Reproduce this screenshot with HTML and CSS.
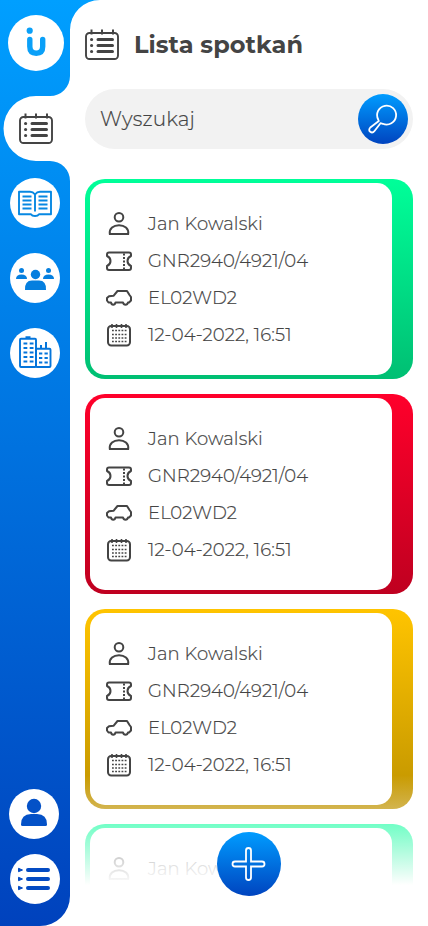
FILE: index.html
```
<!DOCTYPE html>
<html lang="pl">
<head>
<meta charset="utf-8">
<title>Lista spotkań</title>
<link rel="stylesheet" href="styles.css">
</head>
<body>
<svg class="defs" aria-hidden="true">
  <symbol id="list" viewBox="0 0 34 31" fill="none" stroke="currentColor">
    <rect x="1" y="4" width="32" height="26" rx="3.500" stroke-width="1.9"/>
    <path d="M6.500 0.500v5M17 0.500v5M28 0.500v5" stroke-width="2"/>
    <path d="M13 10.500h14.500M13 16.500h14.500M13 22.500h14.500" stroke-width="3" stroke-linecap="round"/>
    <path d="M6.600 10.500h.01M6.600 16.500h.01M6.600 22.500h.01" stroke-width="3.200" stroke-linecap="round"/>
  </symbol>
  <symbol id="person" viewBox="0 0 26 26" fill="none" stroke="currentColor" stroke-width="2">
    <circle cx="13" cy="6.200" r="4.300"/>
    <path d="M3.800 23C3 17.500 7.500 14.200 13 14.200S23 17.500 22.200 23Z" stroke-linejoin="round"/>
  </symbol>
  <symbol id="ticket" viewBox="0 0 26 26" fill="none" stroke="currentColor" stroke-width="2">
    <path d="M3 4.400H23Q25 4.400 25 6.500V8Q21.500 9.500 21.500 13T25 18V20Q25 22 23 22H3Q1 22 1 20V18Q4.500 16.500 4.500 13T1 8V6.500Q1 4.400 3 4.400Z" stroke-linejoin="round"/>
    <path d="M18 5.500v16" stroke-dasharray="2 1.500"/>
  </symbol>
  <symbol id="car" viewBox="0 0 26 26" fill="none" stroke="currentColor" stroke-width="2" stroke-linejoin="round">
    <path d="M5 17.500H2.500L1 15.500V13L3 11.200L7.500 10.800L11.500 6H21L23.500 10L25 12V15.500L23 17.500H22Q21.500 19.700 19.500 19.700T17 17.500H9.500Q9 19.700 7.200 19.700T5 17.500Z"/>
  </symbol>
  <symbol id="date" viewBox="0 0 26 26" fill="none" stroke="currentColor">
    <rect x="2" y="4" width="22" height="19.500" rx="3.200" stroke-width="2"/>
    <path d="M6 2v4M10.500 2v4M15.500 2v4M20 2v4" stroke-width="1.600"/>
    <path d="M6 8.500h14.500M6 12.500h14.500M6 16h14.500M6 19.500h14.500" stroke-width="1.300" stroke-dasharray="1.800 1.375"/>
  </symbol>
</svg>

<div class="app">
  <nav class="side">
    <a class="disc logo"><svg width="56" height="56" viewBox="0 0 56 56"><circle cx="21.700" cy="15.700" r="3.100" fill="#0aa0f8"/><path d="M21.800 24.500v7q0 6.700 6.450 6.700t6.450 -6.700v-7" fill="none" stroke="#0aa0f8" stroke-width="5.400" stroke-linecap="round"/></svg></a>
    <a class="active"><svg class="list"><use href="#list"/></svg></a>
    <a class="disc book"><svg width="50" height="50" viewBox="0 0 50 50" fill="none" stroke="#0788e2" stroke-width="1.900" stroke-linejoin="round">
      <path d="M25 16.500Q23 13.800 20 13.800H9V36.300H21Q22 38 25 38T29 36.300H41V13.800H30Q27 13.800 25 16.500V33.500"/>
      <path d="M12.500 18.500h9M12.500 22.500h9M12.500 26.500h9M12.500 30.500h9M28.500 18.500h9M28.500 22.500h9M28.500 26.500h9M28.500 30.500h9"/></svg></a>
    <a class="disc team"><svg width="50" height="50" viewBox="0 0 50 50" fill="#057fdf">
      <circle cx="25.500" cy="21.500" r="4.700"/><path d="M15 37Q14.500 27.500 22 27.500H29Q36.500 27.500 36 37Z"/>
      <circle cx="11.500" cy="17.500" r="2.500"/><path d="M6 26Q6 21.500 11.500 21.500T17 26Z"/>
      <circle cx="38.500" cy="17.500" r="2.500"/><path d="M33 26Q33 21.500 38.500 21.500T44 26Z"/></svg></a>
    <a class="disc firm"><svg width="50" height="50" viewBox="0 0 50 50" fill="none" stroke="#0475db" stroke-width="1.900">
      <rect x="10" y="10.700" width="16" height="28.300" rx="1"/><rect x="26" y="20.700" width="14.500" height="18.300" rx="1"/>
      <path d="M15.500 9.300h5M31 20v-3M36 20v-6" stroke-width="2"/>
      <path d="M13.500 15.500h10M13.500 20h10M13.500 24.500h10M13.500 29h10M13.500 33.500h10" stroke-dasharray="3.800 2.400"/>
      <path d="M29 25.500h9M29 30h9M29 34.500h9" stroke-dasharray="3.300 2.200"/></svg></a>
    <a class="disc me"><svg width="50" height="50" viewBox="0 0 50 50" fill="#0451c7"><circle cx="25" cy="17" r="7.200"/><path d="M12 35.500Q12 25 22 25H28Q38 25 38 35.500Q38 37 36.500 37H13.500Q12 37 12 35.500Z"/></svg></a>
    <a class="disc menu"><svg width="50" height="50" viewBox="0 0 50 50" fill="#044bc3"><path d="M8.500 14.300l4 1.700l-4 1.700ZM8.500 23.300l4 1.700l-4 1.700ZM8.500 32.300l4 1.700l-4 1.700Z" stroke="#044bc3" stroke-linejoin="round"/><path d="M18 16h20M18 25h20M18 34h20" stroke="#044bc3" stroke-width="4" stroke-linecap="round"/></svg></a>
  </nav>

  <main>
    <header><svg class="list"><use href="#list"/></svg><h1>Lista spotkań</h1></header>
    <div class="search"><span>Wyszukaj</span>
      <button class="find"><svg width="50" height="50" viewBox="0 0 50 50" fill="none" stroke="#fff" stroke-width="1.800" stroke-linejoin="round"><path d="M20.200 25.500A9.500 9.500 0 1 1 24.800 29.800L22.500 29.200L16.500 37Q14.500 39.500 12.300 37.800T12.300 33.500L20.800 27Z"/></svg></button>
    </div>
    <section class="cards">
      <article class="card green"><div class="body">
        <p><svg><use href="#person"/></svg><span>Jan Kowalski</span></p>
        <p><svg><use href="#ticket"/></svg><span>GNR2940/4921/04</span></p>
        <p><svg><use href="#car"/></svg><span>EL02WD2</span></p>
        <p><svg><use href="#date"/></svg><span>12-04-2022, 16:51</span></p>
      </div></article>
      <article class="card red"><div class="body">
        <p><svg><use href="#person"/></svg><span>Jan Kowalski</span></p>
        <p><svg><use href="#ticket"/></svg><span>GNR2940/4921/04</span></p>
        <p><svg><use href="#car"/></svg><span>EL02WD2</span></p>
        <p><svg><use href="#date"/></svg><span>12-04-2022, 16:51</span></p>
      </div></article>
      <article class="card yellow"><div class="body">
        <p><svg><use href="#person"/></svg><span>Jan Kowalski</span></p>
        <p><svg><use href="#ticket"/></svg><span>GNR2940/4921/04</span></p>
        <p><svg><use href="#car"/></svg><span>EL02WD2</span></p>
        <p><svg><use href="#date"/></svg><span>12-04-2022, 16:51</span></p>
      </div></article>
      <article class="card green"><div class="body">
        <p><svg><use href="#person"/></svg><span>Jan Kowalski</span></p>
      </div></article>
    </section>
    <div class="fade"></div>
    <button class="add"><svg width="64" height="64" viewBox="0 0 64 64" fill="none" stroke="#fff" stroke-width="1.800"><path d="M29 18.500Q29 16 31.500 16T34 18.500V29.500H45Q47.500 29.500 47.500 32T45 34.500H34V45.500Q34 48 31.500 48T29 45.500V34.500H18Q15.500 34.500 15.500 32T18 29.500H29Z"/></svg></button>
  </main>
</div>
</body>
</html>
```
FILE: styles.css
```
* { box-sizing: border-box; }
body { margin: 0; background: #fff; color: #444; font-family: Montserrat, Inter, sans-serif; }
h1, p { margin: 0; }
button { border: 0; padding: 0; border-radius: 50%; background: linear-gradient(#009cff, #0044bf); }
svg { display: block; flex: none; }
.defs { position: absolute; width: 0; height: 0; }
.app { display: flex; height: 926px; overflow: hidden; }

.side { position: relative; z-index: 1; width: 70px; flex: none; display: flex; flex-direction: column; padding: 15px 0 22px; }
.side::before {
  content: ""; position: absolute; z-index: -1; left: 0; top: 0; width: 100px; height: 926px;
  background: linear-gradient(#009fff, #0042bd);
  clip-path: path("M0 0H100A30 30 0 0 0 70 30V76A20 20 0 0 1 50 96H36A32.500 32.500 0 0 0 36 161H50A20 20 0 0 1 70 181V896A30 30 0 0 1 40 926H0Z");
}
.disc { width: 50px; height: 50px; margin-left: 10px; border-radius: 50%; background: #fff; }
.disc.logo { width: 56px; height: 56px; margin-left: 8px; }
.active { height: 65px; margin: 25px 0 17px; padding: 17px 0 0 19px; }
.list { width: 34px; height: 31px; color: #444; }
.team, .firm { margin-top: 25px; }
.disc.me { margin-top: auto; margin-left: 9px; }
.menu { margin-top: 15px; }

main { position: relative; flex: 1; padding: 28px 15px 0; }
header { display: flex; align-items: center; gap: 15px; height: 33px; }
h1 { padding-top: 1px; font-size: 24px; line-height: 32px; font-weight: 700; letter-spacing: 0.05px; white-space: nowrap; }
.search { display: flex; align-items: center; justify-content: space-between; height: 60px; margin: 28px 0 30px; padding: 0 5px 0 15px; border-radius: 30px; background: #f2f2f2; font-size: 20px; font-weight: 300; letter-spacing: 0.15px; -webkit-text-stroke: 0.2px #444; }
.find { width: 50px; height: 50px; }
.cards { display: flex; flex-direction: column; gap: 15px; }
.card { height: 200px; padding: 4px 21px 4px 5px; border-radius: 20px; }
.green { background: linear-gradient(#00ff99, #00bf73); }
.red { background: linear-gradient(#ff002b, #bf0020); }
.yellow { background: linear-gradient(#ffc400, #bf9300); }
.body { height: 192px; padding: 22px 0 0 16px; border-radius: 15px; background: #fff; }
.body p { display: flex; align-items: center; gap: 16px; height: 37px; font-size: 18px; font-weight: 300; letter-spacing: 0.12px; white-space: nowrap; -webkit-text-stroke: 0.2px #444; }
.body svg { width: 26px; height: 26px; }
.fade { position: absolute; left: 0; right: 0; top: 775px; height: 151px; background: linear-gradient(rgba(255,255,255,0), #fff 110px); }
.add { position: absolute; left: 147px; top: 832px; width: 64px; height: 64px; }
```
